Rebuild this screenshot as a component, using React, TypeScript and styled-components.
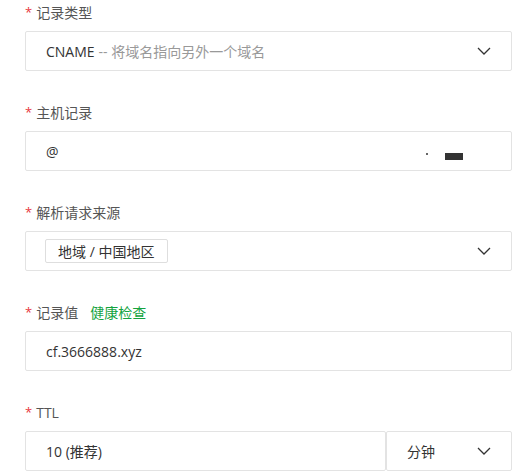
import React from "react";
import styled, { createGlobalStyle } from "styled-components";

const GlobalStyle = createGlobalStyle`
  body {
    margin: 0;
    background: #fff;
    font-family: "Open Sans", "Noto Sans CJK SC", sans-serif;
  }
`;

const Form = styled.div`
  width: 487px;
  padding: 2px 0 0 25px;
  display: flex;
  flex-direction: column;
  gap: 31px;
`;

const Field = styled.div`
  display: flex;
  flex-direction: column;
  gap: 9px;
`;

const Label = styled.div`
  height: 20px;
  display: flex;
  align-items: center;
  font-size: 14px;
  color: #555;
`;

const Star = styled.span`
  color: #e8363c;
  font-size: 13px;
  margin-right: 4px;
`;

const HelpLink = styled.a`
  color: #14a33e;
  margin-left: 12px;
  text-decoration: none;
`;

const Box = styled.div`
  height: 40px;
  box-sizing: border-box;
  border: 1px solid #e3e3e3;
  border-radius: 2px;
  display: flex;
  align-items: center;
  padding: 0 20px 0 20px;
  font-size: 14px;
  color: #333;
`;

const Group = styled.div`
  display: flex;
`;

const GroupBox = styled(Box)<{ $width: number }>`
  width: ${({ $width }) => $width}px;
  flex: none;
`;

const Grow = styled.div`
  flex: 1;
  display: flex;
  align-items: center;
`;

const Hint = styled.span`
  color: #999;
  margin-left: 4px;
`;

const Tag = styled.span`
  height: 24px;
  box-sizing: border-box;
  border: 1px solid #dedede;
  border-radius: 2px;
  padding: 0 13px 0 12px;
  display: flex;
  align-items: center;
  color: #333;
  margin-left: -1px;
`;

const Mask = styled.span`
  display: flex;
  align-items: center;
  gap: 17px;
  margin-right: 28px;
  margin-top: 10px;
`;

const Dot = styled.span`
  width: 2px;
  height: 2px;
  background: #666;
  margin-top: -4px;
`;

const Bar = styled.span`
  width: 18px;
  height: 7px;
  background: #333;
`;

const Chevron = () => (
  <svg width="14" height="8" viewBox="0 0 14 8" fill="none">
    <path d="M1 1l6 6 6-6" stroke="#333" strokeWidth="1.3" />
  </svg>
);

export default function App() {
  return (
    <>
      <GlobalStyle />
      <Form>
        <Field>
          <Label>
            <Star>*</Star>记录类型
          </Label>
          <Box>
            <Grow>
              CNAME<Hint>-- 将域名指向另外一个域名</Hint>
            </Grow>
            <Chevron />
          </Box>
        </Field>
        <Field>
          <Label>
            <Star>*</Star>主机记录
          </Label>
          <Box>
            <Grow>@</Grow>
            <Mask>
              <Dot />
              <Bar />
            </Mask>
          </Box>
        </Field>
        <Field>
          <Label>
            <Star>*</Star>解析请求来源
          </Label>
          <Box>
            <Grow>
              <Tag>地域 / 中国地区</Tag>
            </Grow>
            <Chevron />
          </Box>
        </Field>
        <Field>
          <Label>
            <Star>*</Star>记录值<HelpLink>健康检查</HelpLink>
          </Label>
          <Box>
            <Grow>cf.3666888.xyz</Grow>
          </Box>
        </Field>
        <Field>
          <Label>
            <Star>*</Star>TTL
          </Label>
          <Group>
            <GroupBox $width={361}>10 (推荐)</GroupBox>
            <GroupBox $width={126}>
              <Grow>分钟</Grow>
              <Chevron />
            </GroupBox>
          </Group>
        </Field>
      </Form>
    </>
  );
}
